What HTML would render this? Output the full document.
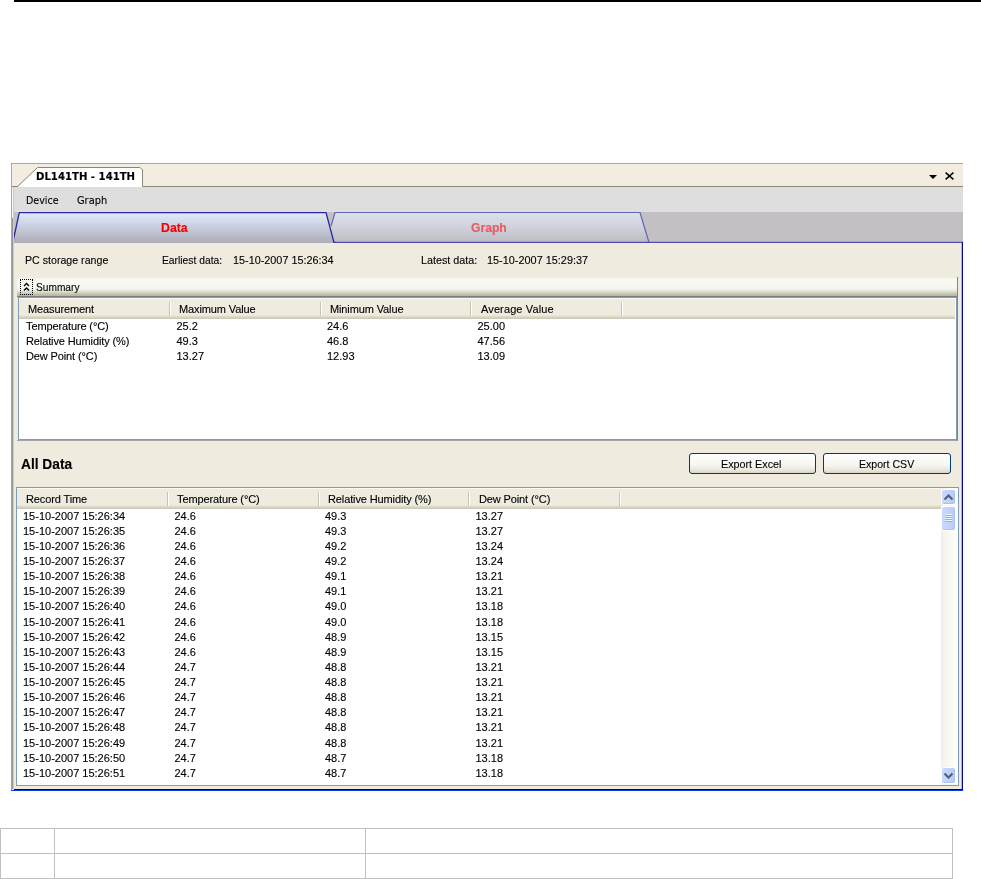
<!DOCTYPE html>
<html lang="en">
<head>
<meta charset="utf-8">
<title>DL141TH - 141TH</title>
<style>
*{box-sizing:border-box;margin:0;padding:0}
html,body{width:981px;height:879px;background:#fff;overflow:hidden}
body{position:relative;-webkit-text-stroke-width:0.12px;font-family:"Liberation Sans",sans-serif;font-size:11px;color:#000;line-height:15px}
.abs{position:absolute}
.t{position:absolute;white-space:nowrap;transform-origin:0 50%}
#topbar{left:14px;top:0;width:967px;height:2px;background:#000}
#win{will-change:transform;left:11px;top:163px;width:952px;height:628px;background:#ece9d8}
#titlestrip{left:0;top:0;width:952px;height:24px;background:#f3ece0;border-top:1px solid #aca899;border-left:1px solid #aca899;border-bottom:1px solid #8a8678}
#menubar{left:0;top:24px;width:952px;height:25px;background:#dedede}
#tabrow{left:0;top:49px;width:952px;height:31px;background:#c3c0c3}
#content{left:0;top:80px;width:952px;height:548px;background:#efecdf}
.tahoma{font-family:"DejaVu Sans Condensed","DejaVu Sans","Liberation Sans",sans-serif}
.lv{position:absolute;background:#fff;border:1px solid #7f9db9;overflow:hidden}
.hdr{position:absolute;left:0;top:0;height:21px;background:linear-gradient(#fbfaf5 0,#fbfaf5 1px,#efecdf 1px,#efecdf 17px,#e6e2d0 18px,#d9d5c4 19px,#cbc7b8 21px)}
.sep{position:absolute;top:4px;width:2px;height:14px;border-left:1px solid #c6c3b3;border-right:1px solid #fff}
.ht{position:absolute;letter-spacing:-0.12px;top:4px;white-space:nowrap;line-height:15px}
.row{position:absolute;left:0;height:15px;white-space:nowrap}
.row span{position:absolute;top:0;line-height:15px}
.btn{position:absolute;height:21px;width:128px;border:1px solid #003c74;border-radius:3px;background:linear-gradient(#ffffff 0%,#f6f5f0 60%,#e6e3d6 90%,#d6d0c5 100%);text-align:center;line-height:19px;font-size:11px}
.sbb{width:15px;height:17px;border:1px solid #fff;border-radius:3px;background:linear-gradient(90deg,#c9d8fc 0%,#c2d3fc 50%,#b7c9f7 100%);box-shadow:inset -1px -1px 0 #aebff0}
</style>
</head>
<body>
<div id="topbar" class="abs"></div>

<div id="win" class="abs">
  <div id="titlestrip" class="abs"></div>
  <svg class="abs" style="left:0;top:0" width="160" height="25" viewBox="0 0 160 25">
    <polygon points="6.5,24 27,4.5 129,4.5 131.5,7 131.5,24" fill="#ffffff"/>
    <polyline points="6.5,23.5 26.5,4.5 129,4.5 131.5,7 131.5,23.5" fill="none" stroke="#8a8678" stroke-width="1"/>
  </svg>
  <svg class="abs" style="left:915px;top:7px" width="32" height="14" viewBox="0 0 32 14">
    <polygon points="3,5 11,5 7,9" fill="#000"/>
    <path d="M19.6,2.6 L27.4,9.4 M27.4,2.6 L19.6,9.4" stroke="#000" stroke-width="1.5" fill="none"/>
  </svg>

  <div id="menubar" class="abs"></div>

  <div id="tabrow" class="abs"></div>
  <svg class="abs" style="left:0;top:49px" width="952" height="31" viewBox="0 0 952 31">
    <defs>
      <linearGradient id="gData" x1="0" y1="0" x2="0" y2="1">
        <stop offset="0" stop-color="#e3ecfb"/>
        <stop offset="0.45" stop-color="#c9cfe0"/>
        <stop offset="1" stop-color="#aeacb6"/>
      </linearGradient>
      <linearGradient id="gGraph" x1="0" y1="0" x2="0" y2="1">
        <stop offset="0" stop-color="#dde2ee"/>
        <stop offset="0.5" stop-color="#cfd0da"/>
        <stop offset="1" stop-color="#bebcc2"/>
      </linearGradient>
    </defs>
    <polygon points="324,0.5 629,0.5 638,30.5 323,30.5 319,14" fill="url(#gGraph)"/>
    <polyline points="320,14 324,0.5 629,0.5 638,30.5" fill="none" stroke="#6464b4" stroke-width="1.2"/>
    <polygon points="2,31 3,25 8,0.5 315,0.5 323,30.5 323,31" fill="url(#gData)"/>
    <polyline points="323,30.5 952,30.5" fill="none" stroke="#4e4eb0" stroke-width="1.3"/>
    <polyline points="2,29.5 8.3,0.5 315,0.5 323,30.5 324,30.5" fill="none" stroke="#2828a0" stroke-width="1.3"/>
  </svg>

  <div id="content" class="abs"></div>
  <div class="abs" style="left:0;top:0;width:1px;height:628px;background:#aca899"></div>
  <div class="abs" style="left:1px;top:24px;width:1px;height:31px;background:#f6f6f6"></div>
  <div class="abs" style="left:1px;top:55px;width:1px;height:571px;background:#969696"></div>
  <div class="abs" style="left:2px;top:24px;width:1px;height:602px;background:#c4d0d2"></div>
  <div class="abs" style="left:950px;top:79px;width:1px;height:548px;background:rgba(16,16,140,.25)"></div>
  <div class="abs" style="left:951px;top:79px;width:1px;height:549px;background:#08088c"></div>
  <div class="abs" style="left:3px;top:626px;width:949px;height:1px;background:#00007c"></div>
  <div class="abs" style="left:0;top:627px;width:952px;height:1px;background:#0a3ae6"></div>

  <!-- Summary bar -->
  <div class="abs" style="left:6px;top:114px;width:941px;height:164px;border-right:1px solid #858585;border-bottom:1px solid #a0a4a8"></div>
  <div class="abs" style="left:6px;top:114px;width:940px;height:20px;background:linear-gradient(#e9e6e0 0,#f3f1ea 1px,#f9f8f3 2px,#f7f6f0 11px,#eeeee4 13px,#d9dbcb 15px,#c2c6af 17px,#b3b79e 19px,#7e7e80 19px,#7e7e80 20px)"></div>
  <div class="abs" style="left:9px;top:116px;width:13px;height:16px;border:1px dotted #000"></div>
  <svg class="abs" style="left:12px;top:119px" width="8" height="10" viewBox="0 0 8 10">
    <path d="M1,4 L3.5,1.5 L6,4 M1,8.5 L3.5,6 L6,8.5" stroke="#000" stroke-width="1.3" fill="none"/>
  </svg>

  <!-- Summary list -->
  <div class="lv" style="left:7px;top:134px;width:939px;height:143px">
    <div class="hdr" style="width:936px">
      <div class="ht" style="left:9px">Measurement</div>
      <div class="sep" style="left:150px"></div>
      <div class="ht" style="left:160px">Maximum Value</div>
      <div class="sep" style="left:301px"></div>
      <div class="ht" style="left:311px">Minimum Value</div>
      <div class="sep" style="left:451px"></div>
      <div class="ht" style="left:462px;letter-spacing:0.12px">Average Value</div>
      <div class="sep" style="left:602px"></div>
    </div>
    <div class="row" style="top:21px"><span style="left:7px;letter-spacing:-0.12px">Temperature (°C)</span><span style="left:157.5px">25.2</span><span style="left:308px">24.6</span><span style="left:458.5px">25.00</span></div>
    <div class="row" style="top:36px"><span style="left:7px;letter-spacing:-0.12px">Relative Humidity (%)</span><span style="left:157.5px">49.3</span><span style="left:308px">46.8</span><span style="left:458.5px">47.56</span></div>
    <div class="row" style="top:51px"><span style="left:7px;letter-spacing:-0.12px">Dew Point (°C)</span><span style="left:157.5px">13.27</span><span style="left:308px">12.93</span><span style="left:458.5px">13.09</span></div>
  </div>
  <div class="btn" style="left:678px;top:290px;width:127px"></div>
  <div class="btn" style="left:812px;top:290px"></div>

  <!-- All data list -->
  <div class="lv" id="lv2" style="left:5px;top:324px;width:943px;height:299px">
    <div class="hdr" style="width:924px">
      <div class="ht" style="left:9px">Record Time</div>
      <div class="sep" style="left:150px"></div>
      <div class="ht" style="left:160px">Temperature (°C)</div>
      <div class="sep" style="left:301px"></div>
      <div class="ht" style="left:311px">Relative Humidity (%)</div>
      <div class="sep" style="left:451px"></div>
      <div class="ht" style="left:462px">Dew Point (°C)</div>
      <div class="sep" style="left:602px"></div>
    </div>
    <div class="row" style="top:20.7px"><span style="left:6px">15-10-2007 15:26:34</span><span style="left:157.5px">24.6</span><span style="left:308px">49.3</span><span style="left:458.5px">13.27</span></div>
    <div class="row" style="top:35.8px"><span style="left:6px">15-10-2007 15:26:35</span><span style="left:157.5px">24.6</span><span style="left:308px">49.3</span><span style="left:458.5px">13.27</span></div>
    <div class="row" style="top:50.9px"><span style="left:6px">15-10-2007 15:26:36</span><span style="left:157.5px">24.6</span><span style="left:308px">49.2</span><span style="left:458.5px">13.24</span></div>
    <div class="row" style="top:66.1px"><span style="left:6px">15-10-2007 15:26:37</span><span style="left:157.5px">24.6</span><span style="left:308px">49.2</span><span style="left:458.5px">13.24</span></div>
    <div class="row" style="top:81.2px"><span style="left:6px">15-10-2007 15:26:38</span><span style="left:157.5px">24.6</span><span style="left:308px">49.1</span><span style="left:458.5px">13.21</span></div>
    <div class="row" style="top:96.3px"><span style="left:6px">15-10-2007 15:26:39</span><span style="left:157.5px">24.6</span><span style="left:308px">49.1</span><span style="left:458.5px">13.21</span></div>
    <div class="row" style="top:111.4px"><span style="left:6px">15-10-2007 15:26:40</span><span style="left:157.5px">24.6</span><span style="left:308px">49.0</span><span style="left:458.5px">13.18</span></div>
    <div class="row" style="top:126.5px"><span style="left:6px">15-10-2007 15:26:41</span><span style="left:157.5px">24.6</span><span style="left:308px">49.0</span><span style="left:458.5px">13.18</span></div>
    <div class="row" style="top:141.7px"><span style="left:6px">15-10-2007 15:26:42</span><span style="left:157.5px">24.6</span><span style="left:308px">48.9</span><span style="left:458.5px">13.15</span></div>
    <div class="row" style="top:156.8px"><span style="left:6px">15-10-2007 15:26:43</span><span style="left:157.5px">24.6</span><span style="left:308px">48.9</span><span style="left:458.5px">13.15</span></div>
    <div class="row" style="top:171.9px"><span style="left:6px">15-10-2007 15:26:44</span><span style="left:157.5px">24.7</span><span style="left:308px">48.8</span><span style="left:458.5px">13.21</span></div>
    <div class="row" style="top:187.0px"><span style="left:6px">15-10-2007 15:26:45</span><span style="left:157.5px">24.7</span><span style="left:308px">48.8</span><span style="left:458.5px">13.21</span></div>
    <div class="row" style="top:202.1px"><span style="left:6px">15-10-2007 15:26:46</span><span style="left:157.5px">24.7</span><span style="left:308px">48.8</span><span style="left:458.5px">13.21</span></div>
    <div class="row" style="top:217.3px"><span style="left:6px">15-10-2007 15:26:47</span><span style="left:157.5px">24.7</span><span style="left:308px">48.8</span><span style="left:458.5px">13.21</span></div>
    <div class="row" style="top:232.4px"><span style="left:6px">15-10-2007 15:26:48</span><span style="left:157.5px">24.7</span><span style="left:308px">48.8</span><span style="left:458.5px">13.21</span></div>
    <div class="row" style="top:247.5px"><span style="left:6px">15-10-2007 15:26:49</span><span style="left:157.5px">24.7</span><span style="left:308px">48.8</span><span style="left:458.5px">13.21</span></div>
    <div class="row" style="top:262.6px"><span style="left:6px">15-10-2007 15:26:50</span><span style="left:157.5px">24.7</span><span style="left:308px">48.7</span><span style="left:458.5px">13.18</span></div>
    <div class="row" style="top:277.7px"><span style="left:6px">15-10-2007 15:26:51</span><span style="left:157.5px">24.7</span><span style="left:308px">48.7</span><span style="left:458.5px">13.18</span></div>
    <!-- scrollbar -->
    <div class="abs" style="left:924px;top:0;width:17px;height:297px;background:linear-gradient(90deg,#f1efe8 0%,#f8f7f2 40%,#fefefb 100%)"></div>
    <div class="abs sbb" style="left:924px;top:1px;height:16px">
      <svg width="13" height="14" viewBox="0 0 13 14" style="position:absolute;left:0;top:0"><path d="M2.5,9.5 L6.5,5.5 L10.5,9.5" stroke="#4d6185" stroke-width="2.2" fill="none"/></svg>
    </div>
    <div class="abs sbb" style="left:924px;top:18px;height:25px">
      <div class="abs" style="left:3px;top:7px;width:7px;height:1px;background:#eef4fe;box-shadow:0 1px 0 #8cb0f8,0 2px 0 #eef4fe,0 3px 0 #8cb0f8,0 4px 0 #eef4fe,0 5px 0 #8cb0f8,0 6px 0 #eef4fe,0 7px 0 #8cb0f8"></div>
    </div>
    <div class="abs sbb" style="left:924px;top:279px;height:17px">
      <svg width="13" height="15" viewBox="0 0 13 15" style="position:absolute;left:0;top:0"><path d="M2.5,5.5 L6.5,9.5 L10.5,5.5" stroke="#4d6185" stroke-width="2.2" fill="none"/></svg>
    </div>
  </div>

  <div class="t" id="ttitle" style="left:25.1px;top:6.0px;line-height:16px;font-family:'DejaVu Sans Condensed','DejaVu Sans','Liberation Sans',sans-serif;font-weight:bold;font-size:11px;transform:scaleX(1.0226)">DL141TH - 141TH</div>
  <div class="t" id="mdevice" style="left:15.0px;top:29.8px;line-height:16px;font-family:'DejaVu Sans Condensed','DejaVu Sans','Liberation Sans',sans-serif;font-size:11px;transform:scaleX(0.9599)">Device</div>
  <div class="t" id="mgraph" style="left:66.4px;top:29.8px;line-height:16px;font-family:'DejaVu Sans Condensed','DejaVu Sans','Liberation Sans',sans-serif;font-size:11px;transform:scaleX(0.9915)">Graph</div>
  <div class="t" id="tdata" style="left:149.9px;top:57.4px;line-height:16px;font-family:'Liberation Sans',sans-serif;font-weight:bold;font-size:12px;color:#f40000;transform:scaleX(1.0263)">Data</div>
  <div class="t" id="tgraph" style="left:459.7px;top:57.4px;line-height:16px;font-family:'Liberation Sans',sans-serif;font-weight:bold;font-size:12px;color:#e65a66;transform:scaleX(1.0129)">Graph</div>
  <div class="t" id="tpc" style="left:14.0px;top:89.0px;line-height:16px;font-family:'Liberation Sans',sans-serif;font-size:11px;transform:scaleX(0.9661)">PC storage range</div>
  <div class="t" id="tearl" style="left:150.9px;top:89.0px;line-height:16px;font-family:'Liberation Sans',sans-serif;font-size:11px;transform:scaleX(0.9361)">Earliest data:</div>
  <div class="t" id="tearld" style="left:222.0px;top:89.0px;line-height:16px;font-family:'Liberation Sans',sans-serif;font-size:11px;transform:scaleX(0.9848)">15-10-2007 15:26:34</div>
  <div class="t" id="tlat" style="left:409.9px;top:89.0px;line-height:16px;font-family:'Liberation Sans',sans-serif;font-size:11px;transform:scaleX(0.9791)">Latest data:</div>
  <div class="t" id="tlatd" style="left:476.0px;top:89.0px;line-height:16px;font-family:'Liberation Sans',sans-serif;font-size:11px;transform:scaleX(0.9897)">15-10-2007 15:29:37</div>
  <div class="t" id="tsum" style="left:25.4px;top:116.3px;line-height:16px;font-family:'Liberation Sans',sans-serif;font-size:11px;transform:scaleX(0.9243)">Summary</div>
  <div class="t" id="tbx" style="left:710.4px;top:292.7px;line-height:16px;font-family:'Liberation Sans',sans-serif;font-size:11px;transform:scaleX(0.9781)">Export Excel</div>
  <div class="t" id="tbc" style="left:848.0px;top:292.7px;line-height:16px;font-family:'Liberation Sans',sans-serif;font-size:11px;transform:scaleX(0.9605)">Export CSV</div>
  <div class="t" id="talldata" style="left:10.4px;top:292.6px;line-height:16px;font-family:'Liberation Sans',sans-serif;font-weight:bold;font-size:14px;transform:scaleX(0.9803)">All Data</div>
</div>

<!-- bottom table -->
<div class="abs" style="left:0;top:828px;width:953px;height:51px;border:1px solid #c0c0c0"></div>
<div class="abs" style="left:0;top:853px;width:953px;height:1px;background:#c0c0c0"></div>
<div class="abs" style="left:54px;top:828px;width:1px;height:51px;background:#c0c0c0"></div>
<div class="abs" style="left:365px;top:828px;width:1px;height:51px;background:#c0c0c0"></div>
</body>
</html>
